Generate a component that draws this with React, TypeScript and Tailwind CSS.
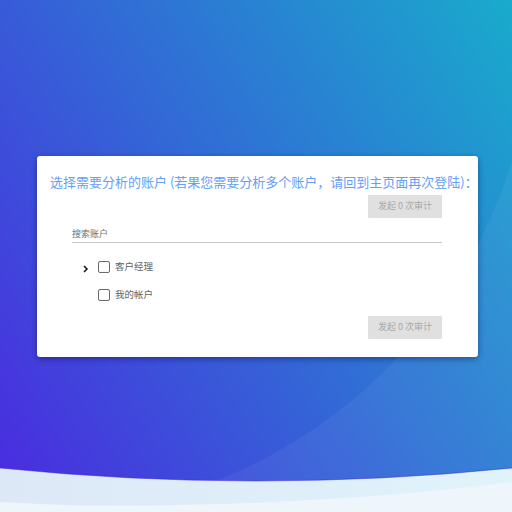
import React from "react";

const cjk = { fontFamily: '"Noto Sans CJK SC", "Noto Sans", sans-serif' };

function Checkbox() {
  return <span className="block w-[12px] h-[12px] border-[1.5px] border-[#6a6a6a] rounded-[2px] bg-white" />;
}

function AuditButton() {
  return (
    <div className="flex justify-end">
      <button className="w-[74px] h-[23px] bg-[#e0e0e0] text-[#a8a8a8] text-[9px] rounded-[1px] flex items-center justify-center" style={cjk}>
        发起 0 次审计
      </button>
    </div>
  );
}

export default function App() {
  return (
    <div className="relative w-full h-[512px] overflow-hidden bg-[linear-gradient(58deg,#4b29e0,#19abcc)]" style={cjk}>
      <svg className="absolute inset-0 w-full h-full" viewBox="0 0 512 512" preserveAspectRatio="none">
        <defs>
          <linearGradient id="w1" x1="0" y1="0" x2="1" y2="0">
            <stop offset="0" stopColor="#dde8f7" />
            <stop offset="1" stopColor="#e0f3fb" />
          </linearGradient>
        </defs>
        <path d="M534,0 A503,503 0 0 1 31,516 L512,512 L512,0 Z" fill="#ffffff" fillOpacity="0.05" />
        <path d="M0,468 Q256,494 512,468 L512,512 L0,512 Z" fill="url(#w1)" />
        <path d="M0,468 Q256,494 512,468" fill="none" stroke="#3a24d0" strokeOpacity="0.5" strokeWidth="1" />
        <path d="M0,502 C150,512 380,500 512,482 L512,512 L0,512 Z" fill="#eef6fc" />
      </svg>
      <div className="relative h-full flex items-center justify-center pl-[3px]">
        <div className="w-[441px] bg-white rounded-[3px] shadow-[0_2px_6px_rgba(0,0,60,0.4)] pt-[16px] pb-[18px]">
          <div className="pl-[13px] text-[13px] leading-[20px] text-[#64a0f4] whitespace-nowrap">
            选择需要分析的账户 (若果您需要分析多个账户，请回到主页面再次登陆)：
          </div>
          <div className="pr-[36px] mt-[3px]">
            <AuditButton />
          </div>
          <div className="pl-[35px] pr-[36px] mt-[8px]">
            <div className="h-[17px] border-b border-[#c6c6c6] text-[9px] leading-[16px] text-[#707070]">搜索账户</div>
          </div>
          <div className="pl-[45px] mt-[18px] flex flex-col gap-[16px]">
            <div className="flex items-center h-[12px]">
              <svg width="7" height="8" viewBox="0 0 7 8" className="mt-[5px]">
                <polyline points="2,1 5,4 2,7" fill="none" stroke="#111" strokeWidth="1.5" />
              </svg>
              <span className="ml-[9px]"><Checkbox /></span>
              <span className="ml-[5px] text-[9.5px] text-[#626262]">客户经理</span>
            </div>
            <div className="flex items-center h-[12px]">
              <span className="ml-[16px]"><Checkbox /></span>
              <span className="ml-[5px] text-[9.5px] text-[#626262]">我的帐户</span>
            </div>
          </div>
          <div className="pr-[36px] mt-[15px]">
            <AuditButton />
          </div>
        </div>
      </div>
    </div>
  );
}
